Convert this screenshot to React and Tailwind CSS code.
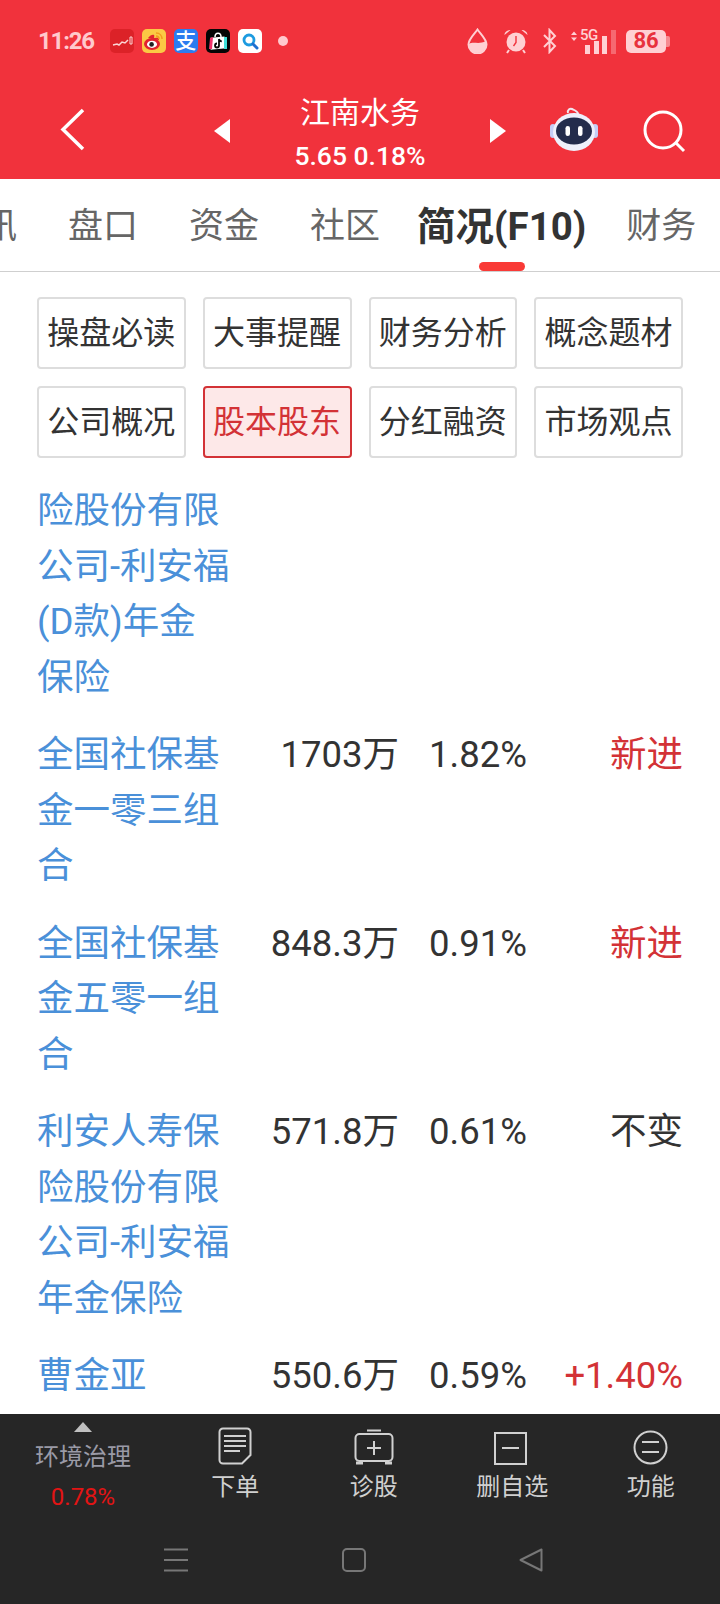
const CJK = '[font-family:Roboto,"Noto_Sans_CJK_SC",sans-serif]';

const tabs = ['盘口', '资金', '社区'];

const shortcuts = [
  '操盘必读', '大事提醒', '财务分析', '概念题材',
  '公司概况', '股本股东', '分红融资', '市场观点',
];

const rows = [
  { name: ['险股份有限', '公司-利安福', '(D款)年金', '保险'] },
  { name: ['全国社保基', '金一零三组', '合'], amount: '1703万', pct: '1.82%', change: '新进', red: true },
  { name: ['全国社保基', '金五零一组', '合'], amount: '848.3万', pct: '0.91%', change: '新进', red: true },
  { name: ['利安人寿保', '险股份有限', '公司-利安福', '年金保险'], amount: '571.8万', pct: '0.61%', change: '不变' },
  { name: ['曹金亚'], amount: '550.6万', pct: '0.59%', change: '+1.40%', red: true },
];

function AppIcons() {
  return (
    <div className="flex items-center gap-2 ml-[16px]">
      {/* 行情 */}
      <svg width="24" height="24" viewBox="0 0 24 24">
        <rect width="24" height="24" rx="5" fill="#dc2228" />
        <path d="M3 16l4-1 2 1 3-3 3 1 3-3" fill="none" stroke="#fbd5d5" strokeWidth="1.500" />
        <path d="M20 8h2v7h-2z" fill="none" stroke="#fbd5d5" strokeWidth="1" />
      </svg>
      {/* 微博 */}
      <svg width="24" height="24" viewBox="0 0 24 24">
        <rect width="24" height="24" rx="5" fill="#fbc944" />
        <ellipse cx="10" cy="15" rx="8" ry="6" fill="#e2232e" />
        <path d="M6 9c2-3 5-4 6-3s-1 3 1 3 4-1 4 2" fill="#e2232e" />
        <ellipse cx="10" cy="15.300" rx="5" ry="3.600" fill="#fff" />
        <circle cx="9.600" cy="15.400" r="2.300" fill="#222" />
        <path d="M14 4c4 0 6 3 6 6M14 7c2 0 3 1.500 3 3" fill="none" stroke="#f39a1f" strokeWidth="1.500" />
      </svg>
      {/* 支付宝 */}
      <div className={`w-6 h-6 rounded-[5px] bg-[#2b7cf0] flex items-center justify-center text-white text-[21px] font-medium leading-none ${CJK}`}>支</div>
      {/* 抖音商城 */}
      <svg width="24" height="24" viewBox="0 0 24 24">
        <rect width="24" height="24" rx="5" fill="#050505" />
        <path d="M5 8h14l1 12H4z" fill="#fff" transform="rotate(-5 12 14)" />
        <path d="M4 9l3-1-1 12-3 0z" fill="#f0336a" />
        <path d="M18 8l3 0 0 12-3 0z" fill="#3fe0da" />
        <path d="M9 8c0-5 6-5 6 0" fill="none" stroke="#fff" strokeWidth="1.500" />
        <path d="M13 10v6.500a2 2 0 1 1-2-2M13 10c.3 1.500 1.300 2.300 2.800 2.400" fill="none" stroke="#050505" strokeWidth="1.800" />
      </svg>
      {/* 搜索 */}
      <svg width="24" height="24" viewBox="0 0 24 24">
        <rect width="24" height="24" rx="5" fill="#fff" />
        <circle cx="11" cy="11" r="5" fill="none" stroke="#1d9be0" strokeWidth="2.800" />
        <path d="M15 15l4 4" stroke="#1d6fd0" strokeWidth="3" strokeLinecap="round" />
      </svg>
      <span className="w-[10px] h-[10px] rounded-full bg-[#ffc9cd] ml-[8px]" />
    </div>
  );
}

function StatusIcons() {
  return (
    <div className="ml-auto flex items-center text-[#ffd0d3]">
      <svg width="21" height="26" viewBox="0 0 21 26">
        <path d="M10.500 1.500C7 6.500 1.500 11 1.500 16.500a9 9 0 0 0 18 0C19.500 11 14 6.500 10.500 1.500z" fill="none" stroke="#ffd0d3" strokeWidth="2" />
        <path d="M2 16c4-3 10 1 17-3 1 5-1 12-8.500 12S2 20 2 16z" fill="#ffd0d3" />
      </svg>
      <svg width="26" height="26" viewBox="0 0 26 26" className="ml-[15px]">
        <circle cx="13" cy="14" r="9.500" fill="#ffd0d3" />
        <path d="M13 8v6.500l-2.500 3.500" fill="none" stroke="#f1323c" strokeWidth="1.400" />
        <path d="M1.500 7c0-3 3-5 6-5zM24.500 7c0-3-3-5-6-5z" fill="#ffd0d3" />
        <path d="M6 22l-2 3M20 22l2 3" stroke="#ffd0d3" strokeWidth="2" />
      </svg>
      <svg width="16" height="26" viewBox="0 0 16 26" className="ml-[13px]">
        <path d="M2 7l11 11-5.500 6V2L13 8 2 19" fill="none" stroke="#ffd0d3" strokeWidth="2" />
      </svg>
      <div className="ml-[13px] relative w-[45px] h-[26px]">
        <svg width="45" height="26" viewBox="0 0 45 26">
          <path d="M0 7l3-3.500L6 7zM0 9.500l3 3.500 3-3.500z" fill="#ffd0d3" />
          <rect x="14" y="17" width="5" height="9" fill="#ffd0d3" />
          <rect x="23" y="13" width="5" height="13" fill="#ffd0d3" />
          <rect x="31" y="8" width="5" height="18" fill="#ffd0d3" />
          <rect x="40" y="2" width="5" height="24" fill="#ffd0d3" opacity="0.35" />
        </svg>
        <span className="absolute left-[9px] -top-[1px] text-[15px] leading-[16px] font-medium tracking-[-0.5px] font-['Roboto',sans-serif]">5G</span>
      </div>
      <div className="ml-[10px] flex items-center">
        <div className="w-[40px] h-[23px] rounded-[5px] bg-[#ffd0d3] flex items-center justify-center text-[#e8313c] text-[22px] font-bold leading-none font-['Roboto',sans-serif]">86</div>
        <span className="w-[4px] h-[11px] rounded-r-[2px] bg-[#f78a90]" />
      </div>
    </div>
  );
}

function Robot() {
  return (
    <svg width="50" height="46" viewBox="0 0 50 46">
      <path d="M18 7c-1-3 2-5 4-4s6 2 6 5" fill="none" stroke="#f1e6ee" strokeWidth="2" />
      <rect x="0" y="18" width="6" height="14" rx="3" fill="#c5cdf5" />
      <rect x="42" y="18" width="6" height="14" rx="3" fill="#c5cdf5" />
      <ellipse cx="24" cy="26" rx="21" ry="19" fill="#eef0fb" />
      <ellipse cx="24" cy="25" rx="18" ry="13.500" fill="#232c4c" />
      <rect x="15.500" y="20" width="4.500" height="10" rx="2.200" fill="#fff" />
      <rect x="28" y="20" width="4.500" height="10" rx="2.200" fill="#fff" />
    </svg>
  );
}

function BottomItem({ label, icon }) {
  return (
    <div className="w-[138.500px] flex flex-col items-center pt-[11px]">
      <div className="h-[40px] flex items-end">{icon}</div>
      <span className={`mt-[4px] text-[24px] leading-[36px] text-[#d0d0d0] ${CJK}`}>{label}</span>
    </div>
  );
}

export default function App() {
  return (
    <div className={`w-[720px] h-[1604px] flex flex-col bg-white overflow-hidden ${CJK}`}>
      {/* red header */}
      <div className="h-[179px] shrink-0 bg-[#f1323c]">
        <div className="h-[82px] pl-[38px] pr-[50px] flex items-center">
          <span className="text-[24px] font-bold tracking-[-1.200px] text-[#ffc9cd] font-['Roboto',sans-serif]">11:26</span>
          <AppIcons />
          <StatusIcons />
        </div>
        <div className="h-[97px] flex items-start">
          <svg width="27" height="45" viewBox="0 0 27 45" className="ml-[59px] mt-[25px]">
            <path d="M24 3L4 22.500 24 42" fill="none" stroke="#fff" strokeWidth="3.500" />
          </svg>
          <svg width="17" height="24" viewBox="0 0 17 24" className="ml-[128px] mt-[37px]">
            <path d="M0 12L16 0v24z" fill="#fff" />
          </svg>
          <div className="w-[258px] flex flex-col items-center text-white">
            <span className="mt-[11px] text-[30px] leading-[40px]">江南水务</span>
            <span className="mt-[6px] text-[26.500px] leading-[34px] font-medium font-['Roboto',sans-serif]">5.65 0.18%</span>
          </div>
          <svg width="17" height="24" viewBox="0 0 17 24" className="mt-[37px]">
            <path d="M17 12L1 0v24z" fill="#fff" />
          </svg>
          <div className="ml-[44px] mt-[24px]"><Robot /></div>
          <svg width="44" height="44" viewBox="0 0 44 44" className="ml-[43px] mt-[28px]">
            <circle cx="20" cy="20" r="18" fill="none" stroke="#fff" strokeWidth="3" />
            <path d="M33 33l8 8" stroke="#fff" strokeWidth="3" />
          </svg>
        </div>
      </div>

      {/* tabs */}
      <div className="h-[93px] shrink-0 border-b border-[#cfcfcf] flex items-center whitespace-nowrap text-[35px] text-[#666] pt-[4px] relative">
        <span className="-ml-[18px]">讯</span>
        {tabs.map((t) => (
          <span key={t} className="ml-[51px]">{t}</span>
        ))}
        <span className="ml-[37px] text-[38.500px] font-bold text-[#333]">简况(F10)</span>
        <span className="ml-[40px]">财务</span>
        <span className="absolute left-[479px] bottom-0 w-[46px] h-[9px] rounded-[5px] bg-[#f93a36]" />
      </div>

      {/* shortcut buttons */}
      <div className="shrink-0 px-[37px] pt-[25px] grid grid-cols-4 gap-x-[17px] gap-y-[17px]">
        {shortcuts.map((s) => {
          const on = s === '股本股东';
          return (
            <div
              key={s}
              className={`h-[72px] rounded-[4px] border-2 flex items-center justify-center text-[32px] ${
                on ? 'border-[#d33236] bg-[#fde8e8] text-[#d33236]' : 'border-[#dddddd] bg-white text-[#333]'
              }`}
            >
              {s}
            </div>
          );
        })}
      </div>

      {/* shareholder table, scrolled */}
      <div className="flex-1 min-h-0 overflow-hidden pt-[14px] px-[37px]">
        {rows.map((r, i) => (
          <div key={i} className="flex py-[11px] text-[36.500px] leading-[55.500px] text-[#333]">
            <div className="w-[196px] text-[#4a90d9] whitespace-nowrap">
              {r.name.map((n) => <div key={n}>{n}</div>)}
            </div>
            <div className="w-[166px] text-right whitespace-nowrap">{r.amount}</div>
            <div className="ml-[30px] w-[100px] whitespace-nowrap">{r.pct}</div>
            <div className={`flex-1 text-right whitespace-nowrap ${r.red ? 'text-[#d33236]' : ''}`}>{r.change}</div>
          </div>
        ))}
      </div>

      {/* bottom bar */}
      <div className="h-[190px] shrink-0 bg-[#262626]">
        <div className="h-[120px] flex">
          <div className="w-[166px] flex flex-col items-center pt-[8px]">
            <svg width="18" height="10" viewBox="0 0 18 10"><path d="M9 0l9 10H0z" fill="#c0c0c0" /></svg>
            <span className="mt-[7px] text-[24px] leading-[36px] text-[#9a9aa6]">环境治理</span>
            <span className="mt-[4px] text-[24px] leading-[36px] text-[#e21414]">0.78%</span>
          </div>
          <BottomItem label="下单" icon={
            <svg width="34" height="38" viewBox="0 0 34 38">
              <path d="M5 1.500h24a3.500 3.500 0 0 1 3.500 3.500v23L24 36.500H5A3.500 3.500 0 0 1 1.500 33V5A3.500 3.500 0 0 1 5 1.500z" fill="none" stroke="#d0d0d0" strokeWidth="2" />
              <path d="M6 9h22M6 14h22M6 19h22M6 24h16" stroke="#d0d0d0" strokeWidth="2" />
            </svg>
          } />
          <BottomItem label="诊股" icon={
            <svg width="40" height="36" viewBox="0 0 40 36">
              <path d="M13 1.500h14" stroke="#d0d0d0" strokeWidth="2" />
              <rect x="1.500" y="5" width="37" height="27" rx="4" fill="none" stroke="#d0d0d0" strokeWidth="2" />
              <path d="M13 19h14M20 12v14" stroke="#d0d0d0" strokeWidth="2" />
              <path d="M2 34h7M31 34h7" stroke="#d0d0d0" strokeWidth="3" />
            </svg>
          } />
          <BottomItem label="删自选" icon={
            <svg width="33" height="33" viewBox="0 0 33 33" className="-ml-[3px]">
              <rect x="1" y="1" width="31" height="31" fill="none" stroke="#d0d0d0" strokeWidth="2" />
              <path d="M8 16h17" stroke="#d0d0d0" strokeWidth="2" />
            </svg>
          } />
          <BottomItem label="功能" icon={
            <svg width="35" height="35" viewBox="0 0 35 35">
              <circle cx="17.500" cy="17.500" r="16" fill="none" stroke="#d0d0d0" strokeWidth="2" />
              <path d="M9 12h17M9 22h17" stroke="#d0d0d0" strokeWidth="2" />
            </svg>
          } />
        </div>
        <div className="h-[70px] flex items-start">
          <svg width="24" height="24" viewBox="0 0 24 24" className="ml-[164px] mt-[14px]">
            <path d="M0 1.500h24M0 12h24M0 22.500h24" stroke="#777" strokeWidth="2" />
          </svg>
          <svg width="24" height="24" viewBox="0 0 24 24" className="ml-[154px] mt-[14px]">
            <rect x="1" y="1" width="22" height="22" rx="4" fill="none" stroke="#777" strokeWidth="2" />
          </svg>
          <svg width="24" height="24" viewBox="0 0 24 24" className="ml-[153px] mt-[14px]">
            <path d="M22.500 1.500v21L1.500 12z" fill="none" stroke="#777" strokeWidth="2" strokeLinejoin="round" />
          </svg>
        </div>
      </div>
    </div>
  );
}
